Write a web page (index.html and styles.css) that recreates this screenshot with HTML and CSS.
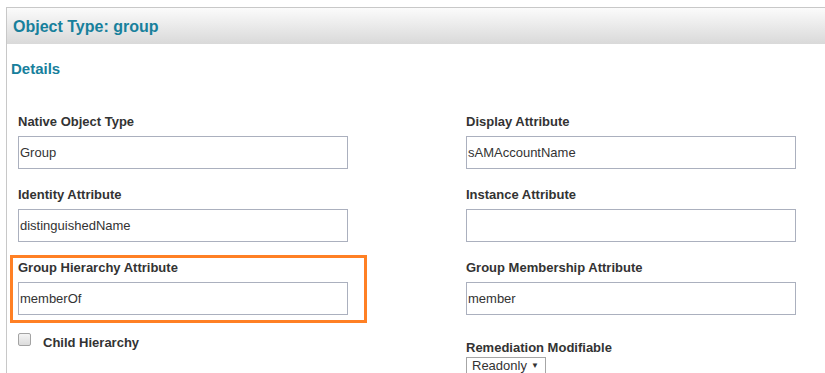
FILE: index.html
```html
<!DOCTYPE html>
<html>
<head>
<meta charset="utf-8">
<link rel="stylesheet" href="styles.css">
</head>
<body>
<div class="panel">
  <div class="panel-header">Object Type: group</div>
  <div class="section-title">Details</div>
  <div class="columns">
    <div class="col col-left">
      <div class="field">
        <div class="label">Native Object Type</div>
        <div class="input">Group</div>
      </div>
      <div class="field">
        <div class="label">Identity Attribute</div>
        <div class="input">distinguishedName</div>
      </div>
      <div class="field highlight">
        <div class="label">Group Hierarchy Attribute</div>
        <div class="input">memberOf</div>
      </div>
      <div class="check-row">
        <span class="checkbox"></span>
        <span class="check-label">Child Hierarchy</span>
      </div>
    </div>
    <div class="col col-right">
      <div class="field">
        <div class="label">Display Attribute</div>
        <div class="input">sAMAccountName</div>
      </div>
      <div class="field">
        <div class="label">Instance Attribute</div>
        <div class="input"></div>
      </div>
      <div class="field">
        <div class="label">Group Membership Attribute</div>
        <div class="input">member</div>
      </div>
      <div class="field field-select">
        <div class="label">Remediation Modifiable</div>
        <div class="select"><span class="select-text">Readonly</span><span class="arrow">▼</span></div>
      </div>
    </div>
  </div>
</div>
</body>
</html>
```

FILE: styles.css
```css
html, body {
  margin: 0;
  padding: 0;
  height: 100%;
  background: #fff;
  overflow: hidden;
  font-family: "Liberation Sans", Arial, sans-serif;
}

.panel {
  box-sizing: border-box;
  margin: 7px 0 0 6px;
  width: 840px;
  height: calc(100% - 7px);
  overflow: hidden;
  border-top: 1px solid #c8c8c8;
  border-left: 1px solid #c8c8c8;
}

.panel-header {
  height: 34px;
  padding: 2px 0 0 6px;
  line-height: 34px;
  font-size: 16px;
  font-weight: bold;
  color: #17809c;
  background: linear-gradient(#fbfbfb, #d9d9d9);
}

.section-title {
  margin-top: 16px;
  padding-left: 4px;
  line-height: 18px;
  font-size: 15px;
  font-weight: bold;
  color: #17809c;
}

.columns {
  display: flex;
  padding: 36px 0 0 11px;
}

.col {
  display: flex;
  flex-direction: column;
}

.col-left {
  width: 448px;
}

.col-right {
  width: 360px;
}

.field {
  width: 330px;
  margin-bottom: 18px;
}

.label {
  line-height: 15px;
  font-size: 13px;
  font-weight: bold;
  color: #333;
  margin-bottom: 7px;
}

.input {
  box-sizing: border-box;
  height: 33px;
  border: 1px solid #abb0be;
  padding-left: 1px;
  line-height: 31px;
  font-size: 13px;
  color: #333;
}

.highlight {
  margin: -5px -19px 0 -8px;
  padding: 2px 16px 5px 5px;
  border: 3px solid #ff8024;
}

.check-row {
  display: flex;
  align-items: flex-start;
  margin-top: 10px;
}

.checkbox {
  box-sizing: border-box;
  width: 13px;
  height: 13px;
  border: 1px solid #a3a3a3;
  border-radius: 2px;
  background: linear-gradient(#f4f4f4, #dcdcdc);
}

.check-label {
  margin-left: 12px;
  padding-top: 2px;
  line-height: 15px;
  font-size: 13px;
  font-weight: bold;
  color: #333;
}

.field-select {
  margin-top: 7px;
  margin-bottom: 0;
}

.field-select .label {
  margin-bottom: 2px;
}

.select {
  box-sizing: border-box;
  display: flex;
  align-items: flex-start;
  justify-content: space-between;
  width: 80px;
  height: 18px;
  padding: 0 6px 0 5px;
  border: 1px solid #a6a6a6;
  font-size: 13px;
  line-height: 15px;
  color: #333;
}

.select .arrow {
  font-size: 8px;
  line-height: 15px;
  color: #333;
}
```
